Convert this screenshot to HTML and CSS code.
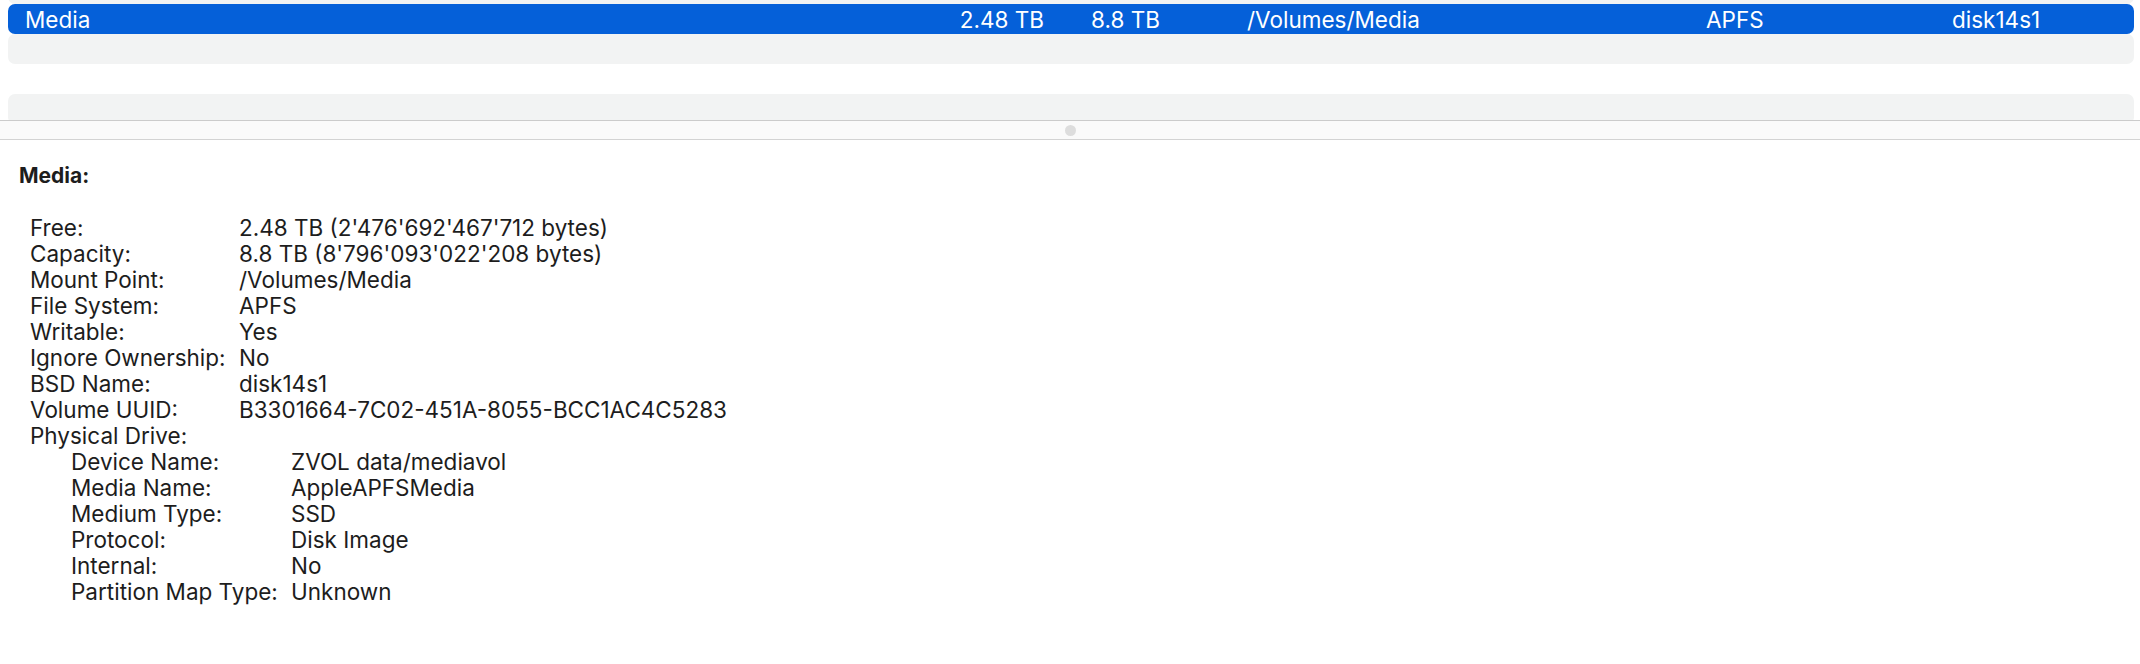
FILE: index.html
```html
<!DOCTYPE html>
<html lang="en">
<head>
    <meta charset="UTF-8">
    <meta name="viewport" content="width=device-width, initial-scale=1.0">
    <title>System Information - Volumes</title>
    <link rel="stylesheet" href="styles.css">
</head>
<body>
    <div class="table">
        <div class="rows">
            <div class="row row-alt row-first"></div>
            <div class="row row-selected">
                <span class="cell">Media</span>
                <span class="cell num">2.48 TB</span>
                <span class="cell num">8.8 TB</span>
                <span class="cell mount">/Volumes/Media</span>
                <span class="cell">APFS</span>
                <span class="cell">disk14s1</span>
            </div>
            <div class="row row-alt"></div>
            <div class="row"></div>
            <div class="row row-alt"></div>
        </div>
    </div>

    <div class="splitter"><span class="grip"></span></div>

    <div class="details">
        <h2>Media:</h2>
        <dl class="props">
            <dt>Free:</dt><dd>2.48 TB (2'476'692'467'712 bytes)</dd>
            <dt>Capacity:</dt><dd>8.8 TB (8'796'093'022'208 bytes)</dd>
            <dt>Mount Point:</dt><dd>/Volumes/Media</dd>
            <dt>File System:</dt><dd>APFS</dd>
            <dt>Writable:</dt><dd>Yes</dd>
            <dt>Ignore Ownership:</dt><dd>No</dd>
            <dt>BSD Name:</dt><dd>disk14s1</dd>
            <dt>Volume UUID:</dt><dd>B3301664-7C02-451A-8055-BCC1AC4C5283</dd>
            <dt class="group">Physical Drive:</dt>
        </dl>
        <dl class="props nested">
            <dt>Device Name:</dt><dd>ZVOL data/mediavol</dd>
            <dt>Media Name:</dt><dd>AppleAPFSMedia</dd>
            <dt>Medium Type:</dt><dd>SSD</dd>
            <dt>Protocol:</dt><dd>Disk Image</dd>
            <dt>Internal:</dt><dd>No</dd>
            <dt>Partition Map Type:</dt><dd>Unknown</dd>
        </dl>
    </div>
</body>
</html>
```

FILE: styles.css
```css
body {
    margin: 0;
    background-color: #ffffff;
    font-family: Inter, "Noto Sans", sans-serif;
    font-size: 22.5px;
    color: #1d1d1d;
}

/* Liste des volumes */
.table {
    height: 120px;
    overflow: hidden;
    padding: 0 6px 0 8px;
}

.row {
    display: grid;
    grid-template-columns: 919px 100px 116px 546px 246px 1fr;
    align-items: center;
    height: 30px;
    padding-left: 17px;
    border-radius: 7px;
}

.row-first {
    margin-top: -26px;
}

.row-alt {
    background-color: #f2f3f3;
}

.row-selected {
    background-color: #0560d9;
    color: #ffffff;
}

.cell {
    white-space: nowrap;
}

.num {
    text-align: right;
}

.mount {
    padding-left: 87px;
}

/* Séparateur */
.splitter {
    height: 18px;
    border-top: 1px solid #cbcbcb;
    border-bottom: 1px solid #d3d3d3;
    background-color: #fafafa;
    display: flex;
    justify-content: center;
    align-items: center;
}

.grip {
    width: 11px;
    height: 11px;
    border-radius: 50%;
    background-color: #dddddd;
}

/* Détails */
.details {
    padding: 23px 19px;
    line-height: 26px;
}

h2 {
    margin: 0 0 26px;
    font-size: 21px;
    font-weight: bold;
}

.props {
    display: grid;
    grid-template-columns: 209px 1fr;
    margin: 0 0 0 11px;
}

.props dt,
.props dd {
    margin: 0;
    white-space: nowrap;
}

.props .group {
    grid-column: 1 / 3;
}

.nested {
    grid-template-columns: 220px 1fr;
    margin-left: 52px;
}
```
